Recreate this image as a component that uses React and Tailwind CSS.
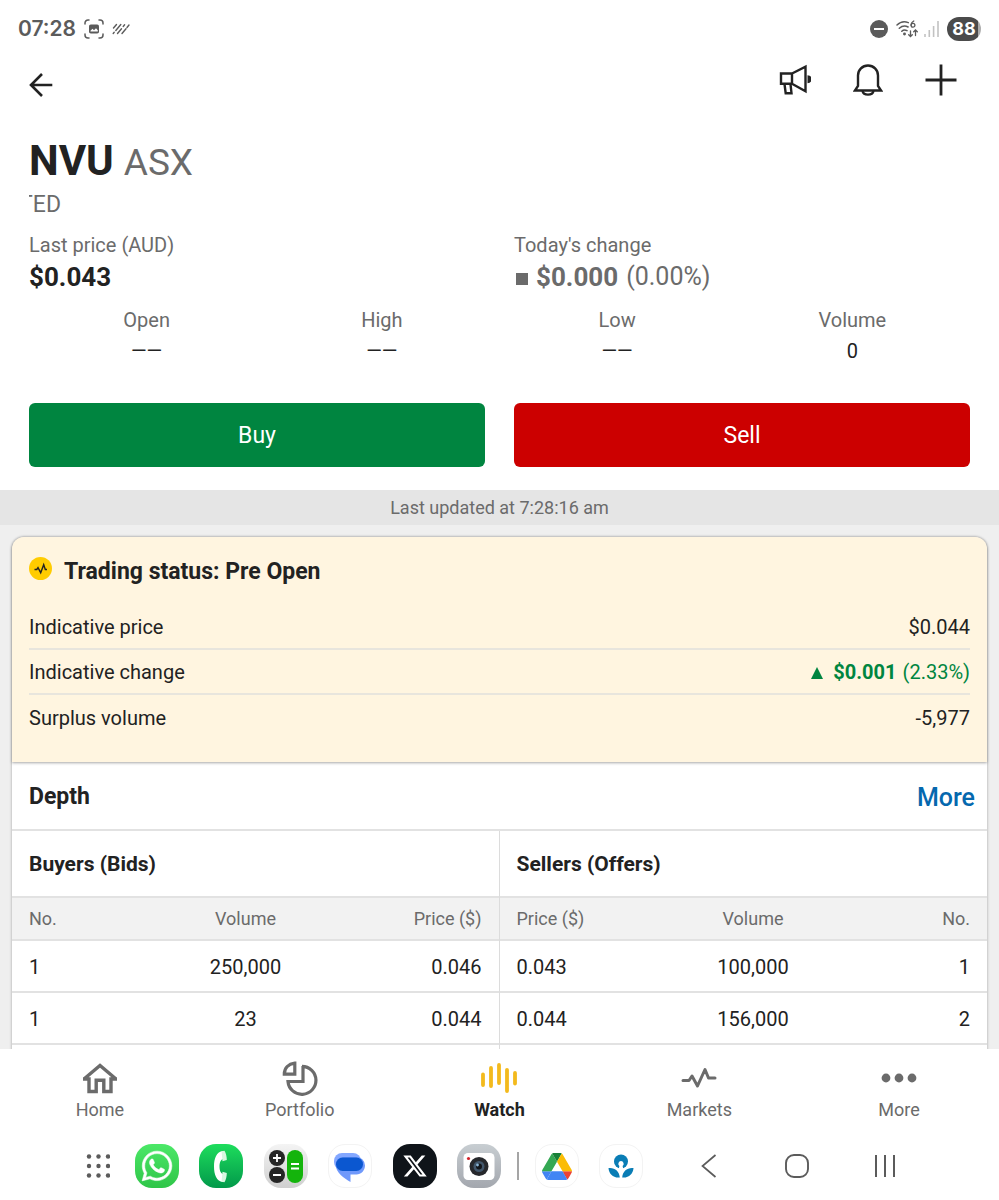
import React from "react";
import { FaWhatsapp, FaXTwitter } from "react-icons/fa6";

function StatusBar() {
  return (
    <div className="flex h-[58px] shrink-0 items-center justify-between pr-[18px] pl-[18px] text-[#5b5b5b]">
      <div className="flex items-center">
        <span className="font-['Inter'] text-[21px] leading-7 font-semibold">07:28</span>
        <svg className="ml-2 h-5 w-5" viewBox="0 0 20 20" fill="none" stroke="currentColor" strokeWidth="1.5" strokeLinecap="round">
          <path d="M1 5V4a3 3 0 0 1 3-3h1M15 1h1a3 3 0 0 1 3 3v1M19 15v1a3 3 0 0 1-3 3h-1M5 19H4a3 3 0 0 1-3-3v-1" />
          <rect x="5" y="5.500" width="10" height="9" rx="1.800" fill="currentColor" stroke="none" />
          <path d="M6.500 11.800l2-2 1.500 1.500 2-2 1.800 2v1.200H6.500z" fill="#fff" stroke="none" />
        </svg>
        <svg className="ml-2 h-3 w-[18px]" viewBox="0 0 18 12" fill="none" stroke="currentColor" strokeWidth="1.400" strokeLinecap="round">
          <path d="M1.500 5L4.500 1.500M1.200 10.500l1-1.200M3.800 7.500L8.800 1.500M5.500 10.500l4-4.800M11.200 3.500l1.400-1.700M10 10.500l4-4.800M15 4.500l2-2.500" />
        </svg>
      </div>
      <div className="flex items-center">
        <svg className="h-[18px] w-[18px]" viewBox="0 0 18 18">
          <circle cx="9" cy="9" r="9" fill="#5b5b5b" />
          <path d="M4 9h10" stroke="#fff" strokeWidth="2" />
        </svg>
        <svg className="ml-2 h-[18px] w-[22px]" viewBox="0 0 22 18" fill="none" stroke="#5b5b5b" strokeWidth="1.500" strokeLinecap="round">
          <path d="M1 5C4.200 1.800 8.500 1 12.300 2.600M3.300 8.300c2.600-2.300 5.800-2.800 8.800-1.300M5.800 11.300c1.400-1.300 3.400-1.600 5.200-.6" />
          <circle cx="8.500" cy="14" r=".7" fill="#5b5b5b" />
          <path d="M17.800 1c-1.900 1-2.700 2.500-2.700 4.300" strokeWidth="1.300" />
          <circle cx="17" cy="5.300" r="1.900" strokeWidth="1.300" />
          <path d="M14.500 10.800v5.700M12.700 14.700l1.800 1.800 1.800-1.800M19.500 15.500V10M17.700 11.800l1.800-1.800 1.800 1.800" strokeWidth="1.300" />
        </svg>
        <svg className="ml-1.5 h-4 w-[15px]" viewBox="0 0 15 16" stroke="#c2c2c2" strokeWidth="1.600">
          <path d="M1 13v3M5.300 9v7M9.600 5v11M14 0v16" />
        </svg>
        <div className="ml-2 flex h-6 w-[34px] items-center justify-center overflow-hidden rounded-full bg-linear-to-r from-[#4b4b4b] from-90% to-[#adadad] to-90% font-['Inter'] text-lg leading-6 font-bold text-white">
          88
        </div>
      </div>
    </div>
  );
}

function AppHeader() {
  return (
    <header className="flex shrink-0 justify-between pr-[42px] pl-[29px]">
      <button aria-label="Back" className="flex h-[54px] items-center">
        <svg className="h-6 w-6" viewBox="0 0 24 24" fill="none" stroke="#222" strokeWidth="2.600">
          <path d="M23.300 12H2.500M13 1L2 12l11 11" />
        </svg>
      </button>
      <div className="flex h-11 items-center gap-[42px]">
        <button aria-label="Announcements">
          <svg className="h-8 w-8" viewBox="0 0 32 32" fill="none" stroke="#222" strokeWidth="2.400">
            <path d="M2 9.500h11v10.300H2zM13 9.500L26.500 2.800v24.400L13 19.800M5.500 20l1.200 9.200h5.800l-1-9" />
            <path d="M28.500 11.200a4 4 0 0 1 0 8z" fill="#222" stroke="none" />
          </svg>
        </button>
        <button aria-label="Alerts">
          <svg className="h-8 w-[30px]" viewBox="0 0 30 32" fill="none" stroke="#222" strokeWidth="2.400">
            <path d="M5 22V11.500a10 10 0 0 1 20 0V22l3 4.500H2z" strokeLinejoin="miter" />
            <path d="M9.500 27c1 4.800 10 4.800 11 0" />
          </svg>
        </button>
        <button aria-label="Add">
          <svg className="h-8 w-8" viewBox="0 0 32 32" stroke="#222" strokeWidth="2.800">
            <path d="M16 .5v31M.5 16h31" />
          </svg>
        </button>
      </div>
    </header>
  );
}

const stats = [
  ["Open", "——"],
  ["High", "——"],
  ["Low", "——"],
  ["Volume", "0"],
];

function Quote() {
  return (
    <section className="shrink-0 px-[29px] pt-[25px] pb-[23px]">
      <h1 className="flex items-baseline gap-2.5 text-[42px] leading-12 font-bold">
        NVU <span className="text-[37px] font-normal text-[#6b6b6b]">ASX</span>
      </h1>
      <div className="mt-0.5 flex w-8 justify-end overflow-hidden text-[23px] leading-8 text-[#6b6b6b]">TED</div>
      <div className="mt-2.5 grid grid-cols-2 gap-x-[29px]">
        <div>
          <div className="text-xl leading-7 text-[#6b6b6b]">Last price (AUD)</div>
          <div className="text-[26px] leading-9 font-bold">$0.043</div>
        </div>
        <div className="text-[#6b6b6b]">
          <div className="text-xl leading-7">Today's change</div>
          <div className="flex items-center text-[26px] leading-9">
            <span className="mt-1 mr-2 ml-0.5 h-3 w-3 bg-[#6b6b6b]" />
            <b className="mr-2">$0.000</b>
            <span className="text-[25px]">(0.00%)</span>
          </div>
        </div>
      </div>
      <div className="mt-[11px] grid grid-cols-4 text-center text-xl">
        {stats.map(([k, v]) => (
          <div key={k}>
            <div className="leading-7 text-[#6b6b6b]">{k}</div>
            <div className="mt-[3px] leading-7">{v}</div>
          </div>
        ))}
      </div>
      <div className="mt-[38px] grid grid-cols-2 gap-[29px] text-[23px] text-white">
        <button className="h-16 rounded-md bg-[#008540] pt-0.5">Buy</button>
        <button className="h-16 rounded-md bg-[#cc0000] pt-0.5">Sell</button>
      </div>
    </section>
  );
}

function TradingStatus() {
  return (
    <section className="relative rounded-t-xl bg-[#fff5e0] px-[17px] pt-[17px] pb-[22px] shadow-[0_1px_3px_rgba(0,0,0,0.35)]">
      <h2 className="flex items-center gap-3 text-[23px] leading-9 font-bold">
        <svg className="-mt-2 h-[23px] w-[23px]" viewBox="0 0 23 23">
          <circle cx="11.500" cy="11.500" r="11.500" fill="#fc0" />
          <path d="M5.500 12.500h2.300l1.200-1.800 2.700 5 3-8 1.600 4.800h1.700" fill="none" stroke="#222" strokeWidth="1.400" />
        </svg>
        Trading status: Pre Open
      </h2>
      <dl className="mt-[15px] divide-y-2 divide-[#e8e5dd] text-xl">
        <div className="flex h-[45px] items-center justify-between">
          <dt>Indicative price</dt>
          <dd>$0.044</dd>
        </div>
        <div className="flex h-[45px] items-center justify-between">
          <dt>Indicative change</dt>
          <dd className="flex items-center text-[#008540]">
            <svg className="mt-0.5 mr-2.5 h-3 w-3" viewBox="0 0 12 12">
              <path d="M6 0l6 12H0z" fill="#008540" />
            </svg>
            <b className="mr-1.5">$0.001</b>(2.33%)
          </dd>
        </div>
        <div className="flex h-[45px] items-center justify-between">
          <dt>Surplus volume</dt>
          <dd>-5,977</dd>
        </div>
      </dl>
    </section>
  );
}

function DepthTable({ title, heads, rows, cols }) {
  return (
    <div>
      <table className="w-full table-fixed border-collapse text-xl">
        <caption className="h-[65px] px-[17px] pt-[19px] text-left text-[21px] leading-7 font-bold">{title}</caption>
        <colgroup>
          {cols.map((c, i) => (
            <col key={i} className={c} />
          ))}
        </colgroup>
        <thead>
          <tr className="h-[43px] border-y-2 border-[#e2e2e2] bg-[#f2f2f2] text-lg text-[#6b6b6b]">
            {heads.map((h) => (
              <th key={h} className="text-center font-normal first:pl-[17px] first:text-left last:pr-[17px] last:text-right">{h}</th>
            ))}
          </tr>
        </thead>
        <tbody>
          {rows.map((r, i) => (
            <tr key={i} className="h-[52px] border-b-2 border-[#e2e2e2]">
              {r.map((c, j) => (
                <td key={j} className="pt-0.5 text-center first:pl-[17px] first:text-left last:pr-[17px] last:text-right">{c}</td>
              ))}
            </tr>
          ))}
        </tbody>
      </table>
    </div>
  );
}

function Depth() {
  return (
    <section>
      <div className="flex h-[69px] items-center justify-between border-b-2 border-[#e2e2e2] pt-1 pr-3 pl-[17px]">
        <h2 className="text-[23px] font-bold">Depth</h2>
        <a href="#depth" className="text-[25px] font-medium text-[#0568ae]">More</a>
      </div>
      <div className="grid grid-cols-2 divide-x divide-[#dcdcdc]">
        <DepthTable
          title="Buyers (Bids)"
          heads={["No.", "Volume", "Price ($)"]}
          cols={["w-[28%]", "w-[40%]", "w-[32%]"]}
          rows={[["1", "250,000", "0.046"], ["1", "23", "0.044"], ["", "", ""]]}
        />
        <DepthTable
          title="Sellers (Offers)"
          heads={["Price ($)", "Volume", "No."]}
          cols={["w-[32%]", "w-[40%]", "w-[28%]"]}
          rows={[["0.043", "100,000", "1"], ["0.044", "156,000", "2"], ["", "", ""]]}
        />
      </div>
    </section>
  );
}

const tabs = [
  {
    name: "Home",
    icon: (
      <svg className="h-9 w-9" viewBox="0 0 36 36" fill="none" stroke="#6b6b6b" strokeWidth="3.400">
        <path d="M2 19L18 5.500 34 19M1 19h6v12.500h7.200V20.200h7.600v11.300H29V19h6" />
      </svg>
    ),
  },
  {
    name: "Portfolio",
    icon: (
      <svg className="h-9 w-9" viewBox="0 0 36 36" fill="none" stroke="#6b6b6b" strokeWidth="3.200">
        <path d="M12.800 3.200v11H2.300C2.300 8 6.500 4 12.800 3.200z" />
        <path d="M20 6.300a14 14 0 1 1-14 15.200h15V6" />
      </svg>
    ),
  },
  {
    name: "Watch",
    active: true,
    icon: (
      <svg className="h-9 w-9" viewBox="0 0 36 36" fill="none" stroke="#f3ba1d" strokeWidth="3.800" strokeLinecap="round">
        <path d="M2 14.500v10.500M10 8v18M18 5v18M26 9.800v21.200M34 13v10.500" />
      </svg>
    ),
  },
  {
    name: "Markets",
    icon: (
      <svg className="h-9 w-9" viewBox="0 0 36 36" fill="none" stroke="#6b6b6b" strokeWidth="3" strokeLinecap="round" strokeLinejoin="round">
        <path d="M2 20.500h6l3-4.500 5.500 10L24 9.500l3.500 8.500H34" />
      </svg>
    ),
  },
  {
    name: "More",
    icon: (
      <svg className="h-9 w-9" viewBox="0 0 36 36" fill="#6b6b6b">
        <circle cx="5" cy="18" r="4.400" />
        <circle cx="18" cy="18" r="4.400" />
        <circle cx="31" cy="18" r="4.400" />
      </svg>
    ),
  },
];

function TabBar() {
  return (
    <nav className="grid shrink-0 grid-cols-5 bg-white pt-[11px] pb-2">
      {tabs.map((t) => (
        <button key={t.name} className="flex flex-col items-center">
          {t.icon}
          <span className={t.active ? "text-lg leading-7 font-bold text-[#222]" : "text-lg leading-7 text-[#6b6b6b]"}>{t.name}</span>
        </button>
      ))}
    </nav>
  );
}

const tile = "flex h-11 w-11 items-center justify-center rounded-[17px]";

function TaskBar() {
  return (
    <nav className="flex h-[68px] shrink-0 items-center justify-center bg-white pr-4">
      <button aria-label="All apps" className="mr-[25px]">
        <svg className="h-6 w-6" viewBox="0 0 24 24" fill="#5b5b5b">
          {[2.5, 12, 21.5].map((y) => [3, 12.5, 22].map((x) => <circle key={x + "-" + y} cx={x} cy={y} r="2.200" />))}
        </svg>
      </button>
      <div className="flex w-[366px] justify-between">
        <button aria-label="WhatsApp" className={tile + " bg-linear-to-b from-[#4be867] to-[#2fc548] text-white"}>
          <FaWhatsapp className="h-[34px] w-[34px]" stroke="currentColor" strokeWidth="8" />
        </button>
        <button aria-label="Phone" className={tile + " bg-linear-to-b from-[#1ddd5c] to-[#02994a]"}>
          <svg className="h-11 w-11" viewBox="0 0 44 44">
            <path d="M24 7C17.500 7.500 15 14.500 15 22.500S17.500 37.500 24 38l1.500-7.500c-3.500-.5-5-3.500-5-8s1.500-7.500 5-8z" fill="#fff" />
            <path d="M22.500 7.300l3-.6c1.500 2.500 2.300 6 2.300 9.300l-4.300 1.300zM22.500 37.700l3 .6c1.500-2.500 2.300-6 2.300-9.300l-4.300-1.300z" fill="#d8f7e1" />
          </svg>
        </button>
        <button aria-label="Calculator" className={tile + " bg-linear-to-b from-[#f4f4f4] to-[#cfcfcf]"}>
          <svg className="h-11 w-11" viewBox="0 0 44 44">
            <circle cx="13" cy="14" r="8" fill="#252525" />
            <circle cx="13" cy="31" r="8" fill="#252525" />
            <rect x="23" y="6" width="16" height="33" rx="8" fill="#14b40c" />
            <path d="M9 14h8M13 10v8M9 31h8M27 20h8M27 24.500h8" stroke="#fff" strokeWidth="1.800" />
          </svg>
        </button>
        <button aria-label="Messages" className={tile + " border border-[#f3f3f3] bg-white"}>
          <svg className="h-11 w-11 shrink-0" viewBox="0 0 44 44">
            <rect x="6" y="9" width="27" height="17" rx="8" fill="#83a7ff" />
            <path d="M15 13h13.500a8.500 8.500 0 0 1 8.500 8.500c0 5-4 9-8.500 9H22.500V38C16 34 8 29 7.500 20.500 8 16 11 13 15 13z" fill="#7099fb" />
            <rect x="8" y="13.500" width="27" height="13.500" rx="6.700" fill="#0b57d0" />
          </svg>
        </button>
        <button aria-label="X" className={tile + " bg-[#0f1419] text-white"}>
          <FaXTwitter className="h-[26px] w-[26px]" />
        </button>
        <button aria-label="Camera" className={tile + " bg-linear-to-b from-[#c8ced2] to-[#a3a7ae]"}>
          <svg className="h-11 w-11" viewBox="0 0 44 44">
            <rect x="6.500" y="9" width="31" height="27" rx="4.500" fill="#fff" />
            <circle cx="11.500" cy="14.500" r="1.600" fill="#d3222a" />
            <circle cx="22" cy="22.500" r="9.500" fill="#26282c" />
            <circle cx="22" cy="22.500" r="5.500" fill="#41566b" />
            <circle cx="22" cy="22.500" r="3" fill="#121519" />
            <circle cx="20.500" cy="21" r="1.400" fill="#8ab6d6" />
          </svg>
        </button>
      </div>
      <div className="mx-4 h-7 w-0.5 bg-[#a5a5a5]" />
      <div className="flex gap-5">
        <button aria-label="Drive" className={tile + " border border-[#f3f3f3] bg-white"}>
          <svg className="h-[27px] w-[30px]" viewBox="0 0 87.3 78">
            <path d="M6.600 66.850l3.850 6.650c.8 1.400 1.950 2.500 3.300 3.300L27.500 53H0c0 1.550.4 3.100 1.200 4.500z" fill="#4285f4" />
            <path d="M43.650 25L29.900 1.200c-1.350.8-2.500 1.900-3.300 3.300L1.200 48.500A9 9 0 0 0 0 53h27.500z" fill="#34a853" />
            <path d="M73.550 76.800c1.350-.8 2.500-1.900 3.300-3.300l1.600-2.750 7.650-13.250c.8-1.400 1.200-2.950 1.200-4.500H59.800l5.850 11.500z" fill="#ea4335" />
            <path d="M43.650 25L57.400 1.200C56.050.4 54.500 0 52.900 0H34.400c-1.600 0-3.150.45-4.500 1.200z" fill="#188038" />
            <path d="M59.800 53H27.500L13.750 76.800c1.350.8 2.900 1.200 4.500 1.200h50.800c1.600 0 3.150-.45 4.500-1.200z" fill="#4285f4" />
            <path d="M73.400 26.500L60.700 4.500c-.8-1.400-1.950-2.500-3.300-3.300L43.650 25l16.150 28h27.450c0-1.550-.4-3.100-1.200-4.500z" fill="#fbbc04" />
          </svg>
        </button>
        <button aria-label="ANZ" className={tile + " border border-[#f3f3f3] bg-white"}>
          <svg className="h-11 w-11 shrink-0" viewBox="0 0 44 44" fill="#0a7db5">
            <circle cx="22" cy="17.500" r="7" />
            <path d="M22 17a2.800 2.800 0 0 1 1.600 5l.8 3.500h-4.800l.8-3.500A2.800 2.800 0 0 1 22 17z" fill="#fff" />
            <path d="M9.500 24c6-.8 10.800 3 11.300 9.500C14.500 34.300 9.800 30 9.500 24zM34.500 24c-6-.8-10.800 3-11.300 9.500C29.500 34.300 34.200 30 34.500 24z" />
          </svg>
        </button>
      </div>
      <div className="ml-[54px] flex gap-16 text-[#5b5b5b]">
        <button aria-label="System back">
          <svg className="h-6 w-6" viewBox="0 0 24 24" fill="none" stroke="currentColor" strokeWidth="1.700">
            <path d="M18.500 1L5.500 12l13 11" />
          </svg>
        </button>
        <button aria-label="System home">
          <svg className="h-6 w-6" viewBox="0 0 24 24" fill="none" stroke="currentColor" strokeWidth="1.900">
            <rect x="1" y="1" width="22" height="22" rx="8" />
          </svg>
        </button>
        <button aria-label="Recent apps">
          <svg className="h-6 w-6" viewBox="0 0 24 24" stroke="currentColor" strokeWidth="2">
            <path d="M3 1v22M12 1v22M21 1v22" />
          </svg>
        </button>
      </div>
    </nav>
  );
}

export default function App() {
  return (
    <div className="flex h-screen flex-col bg-white font-['Roboto',sans-serif] text-[#222]">
      <StatusBar />
      <AppHeader />
      <Quote />
      <div className="h-[35px] shrink-0 bg-[#e5e5e5] text-center text-lg leading-9 text-[#6b6b6b]">Last updated at 7:28:16 am</div>
      <main className="min-h-0 flex-1 overflow-hidden bg-[#efefef] px-3 pt-3">
        <div className="rounded-t-xl bg-white shadow-[0_0_3px_rgba(0,0,0,0.35)]">
          <TradingStatus />
          <Depth />
        </div>
      </main>
      <TabBar />
      <TaskBar />
    </div>
  );
}
